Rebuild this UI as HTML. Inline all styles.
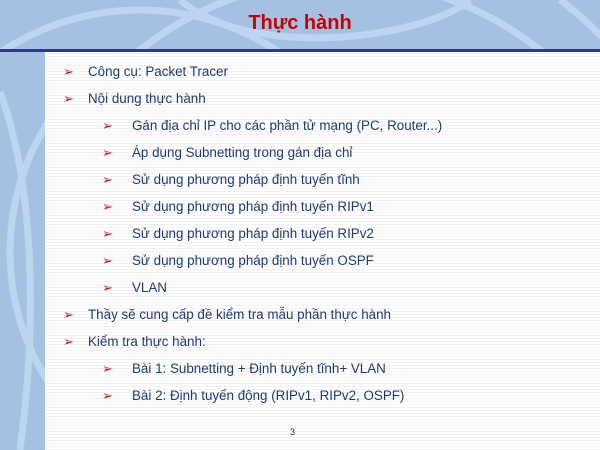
<html><head><style>
html,body{margin:0;overflow:hidden}
body{width:600px;height:450px;position:relative;font-family:"Liberation Sans",sans-serif;
background:repeating-linear-gradient(#fff 0,#fff 2px,#f1f1f1 2px,#f1f1f1 3px);}
.hdr{position:absolute;left:0;top:0;width:600px;height:49px;background:#a4c1e2;overflow:hidden}
.line{position:absolute;left:0;top:49px;width:600px;height:3px;background:#2b3a8c}
.side{position:absolute;left:0;top:52px;width:45px;height:398px;background:#a4c1e2;overflow:hidden}
h1{position:absolute;top:12px;left:0;width:600px;text-align:center;margin:0;font-size:20px;color:#cc0000;font-weight:bold}
.it{position:absolute;font-size:13.4px;color:#1b3b72;line-height:16px;white-space:nowrap}
.b{position:absolute;color:#d01010;font-size:13px;line-height:16px}
</style></head><body>
<div class="hdr"><svg width="600" height="49"><g fill="none" stroke="#bcd5f0" stroke-width="7">
<circle cx="340" cy="300" r="320"/><circle cx="140" cy="260" r="250"/><path d="M180 0 C250 60 420 40 470 0"/><path d="M560 0 C600 30 600 40 620 49"/></g></svg></div>
<div class="line"></div>
<div class="side"><svg width="45" height="398"><g fill="none" stroke="#bcd5f0" stroke-width="7"><circle cx="250" cy="200" r="240"/><path d="M0 40 C30 120 40 250 20 398"/></g></svg></div>
<h1>Thực hành</h1>
<div class="b" style="left:63px;top:64px">➢</div><div class="it" style="left:88px;top:64px">Công cụ: Packet Tracer</div>
<div class="b" style="left:63px;top:91px">➢</div><div class="it" style="left:88px;top:91px">Nội dung thực hành</div>
<div class="b" style="left:102px;top:118px">➢</div><div class="it" style="left:132px;top:118px">Gán địa chỉ IP cho các phần tử mạng (PC, Router...)</div>
<div class="b" style="left:102px;top:145px">➢</div><div class="it" style="left:132px;top:145px">Áp dụng Subnetting trong gán địa chỉ</div>
<div class="b" style="left:102px;top:172px">➢</div><div class="it" style="left:132px;top:172px">Sử dụng phương pháp định tuyến tĩnh</div>
<div class="b" style="left:102px;top:199px">➢</div><div class="it" style="left:132px;top:199px">Sử dụng phương pháp định tuyến RIPv1</div>
<div class="b" style="left:102px;top:226px">➢</div><div class="it" style="left:132px;top:226px">Sử dụng phương pháp định tuyến RIPv2</div>
<div class="b" style="left:102px;top:253px">➢</div><div class="it" style="left:132px;top:253px">Sử dụng phương pháp định tuyến OSPF</div>
<div class="b" style="left:102px;top:280px">➢</div><div class="it" style="left:132px;top:280px">VLAN</div>
<div class="b" style="left:63px;top:307px">➢</div><div class="it" style="left:88px;top:307px">Thầy sẽ cung cấp đề kiểm tra mẫu phần thực hành</div>
<div class="b" style="left:63px;top:334px">➢</div><div class="it" style="left:88px;top:334px">Kiểm tra thực hành:</div>
<div class="b" style="left:102px;top:361px">➢</div><div class="it" style="left:132px;top:361px">Bài 1: Subnetting + Định tuyến tĩnh+ VLAN</div>
<div class="b" style="left:102px;top:388px">➢</div><div class="it" style="left:132px;top:388px">Bài 2: Định tuyến động (RIPv1, RIPv2, OSPF)</div>
<div style="position:absolute;left:290px;top:427px;font-size:9px;color:#333">3</div>
</body></html>
